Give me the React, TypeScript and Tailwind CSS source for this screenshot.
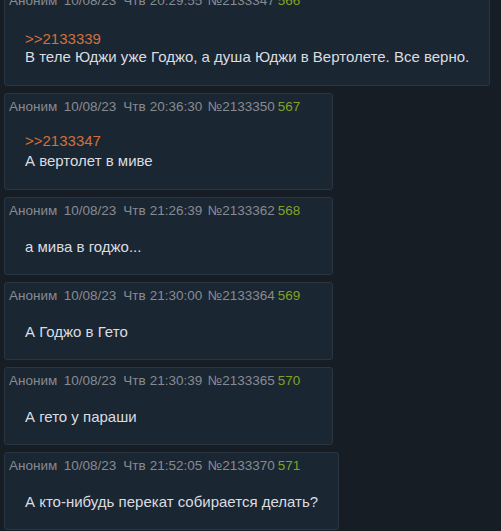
type PostData = {
  date: string;
  num: string;
  idx: string;
  reply?: string;
  text: string;
};

const posts: PostData[] = [
  { date: '10/08/23', num: '2133347', idx: '566', reply: '2133339', text: 'В теле Юджи уже Годжо, а душа Юджи в Вертолете. Все верно.' },
  { date: '10/08/23', num: '2133350', idx: '567', reply: '2133347', text: 'А вертолет в миве' },
  { date: '10/08/23', num: '2133362', idx: '568', text: 'а мива в годжо...' },
  { date: '10/08/23', num: '2133364', idx: '569', text: 'А Годжо в Гето' },
  { date: '10/08/23', num: '2133365', idx: '570', text: 'А гето у параши' },
  { date: '10/08/23', num: '2133370', idx: '571', text: 'А кто-нибудь перекат собирается делать?' },
];

const times = ['20:29:55', '20:36:30', '21:26:39', '21:30:00', '21:30:39', '21:52:05'];

function Post({ post, time, first }: { post: PostData; time: string; first?: boolean }) {
  let body = 'mt-[17px] pb-[17px] leading-[20px]';
  if (first) body = 'mt-[20px] pb-[19px] leading-[18px]';
  else if (post.reply) body = 'mt-[15px] pb-[18px] leading-[20px]';

  return (
    <div className={`w-fit rounded-[3px] border border-[#2a3542] bg-[#1b2633] ${first ? '-mt-[13.5px]' : ''}`}>
      <div className="flex items-baseline pl-[4px] pr-[32px] pt-[4px] text-[13.5px] leading-[18px] text-[#878b91] whitespace-nowrap">
        <span className="mr-[6.5px]">Аноним</span>
        <span className="mr-[7px]">{post.date}</span>
        <span className="mr-[4px]">Чтв</span>
        <span className="mr-[5.5px]">{time}</span>
        <span className="mr-[3px]">№{post.num}</span>
        <span className="text-[#7fa424]">{post.idx}</span>
      </div>
      <div className={`mx-[20px] text-[15px] text-[#dadde0] whitespace-nowrap ${body}`}>
        {post.reply && <div className="text-[#d3703a]">&gt;&gt;{post.reply}</div>}
        <div>{post.text}</div>
      </div>
    </div>
  );
}

export default function App() {
  return (
    <div
      className="h-[531px] overflow-hidden bg-[#161d25] pl-[4px]"
      style={{ fontFamily: '"Liberation Sans", Arial, sans-serif' }}
    >
      <div className="flex flex-col items-start gap-[7px]">
        {posts.map((p, i) => (
          <Post key={p.num} post={p} time={times[i]} first={i === 0} />
        ))}
      </div>
    </div>
  );
}
